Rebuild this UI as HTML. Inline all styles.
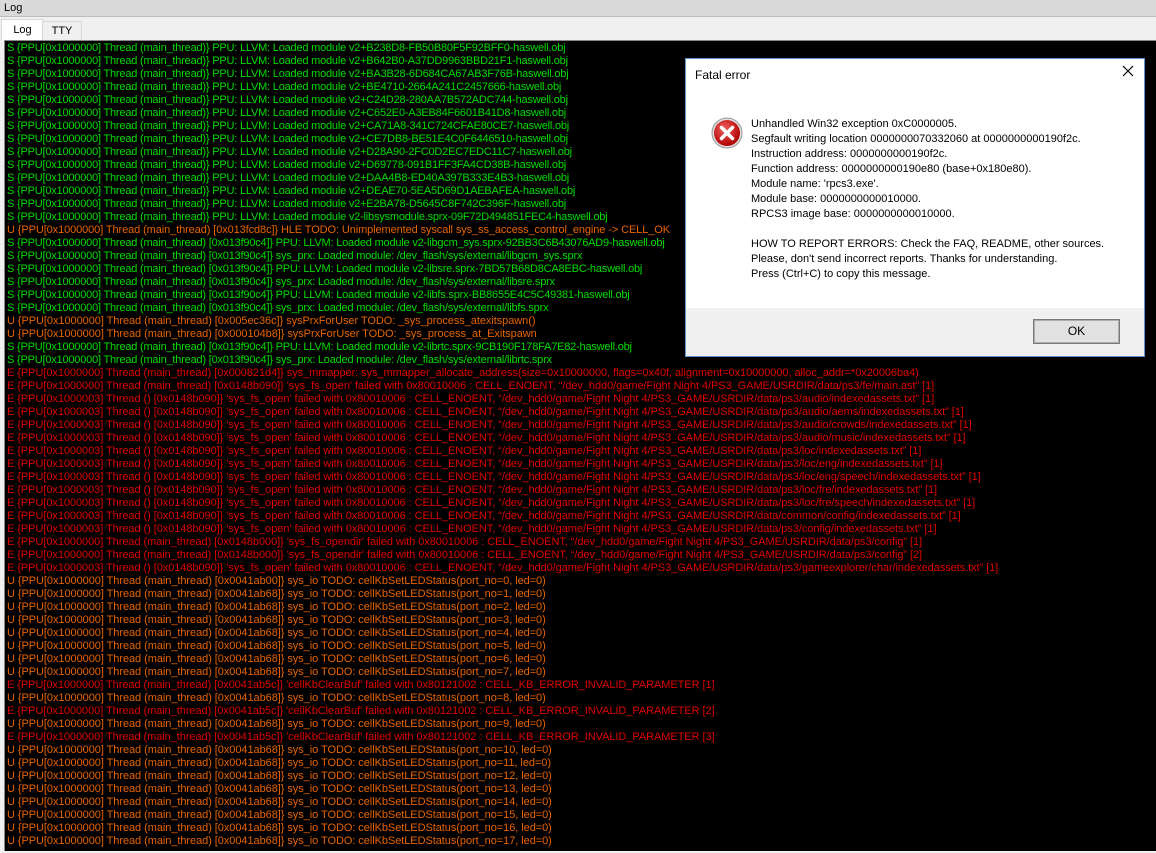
<!DOCTYPE html>
<html><head><meta charset="utf-8"><style>
html,body{margin:0;padding:0;width:1156px;height:853px;overflow:hidden;background:#f0f0f0;font-family:"Liberation Sans",sans-serif;}
#title{position:absolute;left:0;top:0;width:1156px;height:16px;background:#dadada;border-bottom:1px solid #bdbdbd;font-size:11px;line-height:16px;}
#title span{position:absolute;left:4px;top:0;}
.tab{position:absolute;font-size:11px;line-height:20px;text-align:center;}
#log{position:absolute;left:4px;top:40px;width:1152px;height:810px;background:#000;border-top:1px solid #888;border-left:1px solid #888;overflow:hidden;}
#lines{position:absolute;left:2px;top:1px;font-size:11px;line-height:13px;white-space:pre;}
.s{color:#00dd00;letter-spacing:-0.2px}.u{color:#e86400;letter-spacing:-0.06px}.e{color:#e00000;letter-spacing:-0.06px}
#dlg{position:absolute;left:685px;top:58px;width:458px;height:297px;background:#fff;border:1px solid #5a8fd0;font-size:12px;}
#dlg .t{position:absolute;left:9px;top:9px;}
#dlg .x{position:absolute;left:436px;top:6px;}
#dlg .msg{position:absolute;left:65px;top:58px;line-height:15px;white-space:pre;font-size:11px;}
#dlg .foot{position:absolute;left:0;top:249px;width:458px;height:48px;background:#f0f0f0;}
#dlg .ok{position:absolute;left:348px;top:12px;width:85px;height:23px;border:1px solid #adadad;background:#e1e1e1;box-sizing:border-box;outline:1px solid #7a7a7a;text-align:center;line-height:21px;}
</style></head><body>
<div id="title"><span>Log</span></div>
<div class="tab" style="left:1px;top:19px;width:41px;height:21px;background:#fff;border:1px solid #d9d9d9;border-bottom:none;">Log</div>
<div class="tab" style="left:42px;top:21px;width:38px;height:18px;line-height:18px;background:#f0f0f0;border:1px solid #d9d9d9;border-bottom:none;">TTY</div>
<div id="log"><div id="lines"><span class="s">S {PPU[0x1000000] Thread (main_thread)} PPU: LLVM: Loaded module v2+B238D8-FB50B80F5F92BFF0-haswell.obj
S {PPU[0x1000000] Thread (main_thread)} PPU: LLVM: Loaded module v2+B642B0-A37DD9963BBD21F1-haswell.obj
S {PPU[0x1000000] Thread (main_thread)} PPU: LLVM: Loaded module v2+BA3B28-6D684CA67AB3F76B-haswell.obj
S {PPU[0x1000000] Thread (main_thread)} PPU: LLVM: Loaded module v2+BE4710-2664A241C2457666-haswell.obj
S {PPU[0x1000000] Thread (main_thread)} PPU: LLVM: Loaded module v2+C24D28-280AA7B572ADC744-haswell.obj
S {PPU[0x1000000] Thread (main_thread)} PPU: LLVM: Loaded module v2+C652E0-A3EB84F6601B41D8-haswell.obj
S {PPU[0x1000000] Thread (main_thread)} PPU: LLVM: Loaded module v2+CA71A8-341C724CFAE80CE7-haswell.obj
S {PPU[0x1000000] Thread (main_thread)} PPU: LLVM: Loaded module v2+CE7DB8-BE51E4C0F6446510-haswell.obj
S {PPU[0x1000000] Thread (main_thread)} PPU: LLVM: Loaded module v2+D28A90-2FC0D2EC7EDC11C7-haswell.obj
S {PPU[0x1000000] Thread (main_thread)} PPU: LLVM: Loaded module v2+D69778-091B1FF3FA4CD38B-haswell.obj
S {PPU[0x1000000] Thread (main_thread)} PPU: LLVM: Loaded module v2+DAA4B8-ED40A397B333E4B3-haswell.obj
S {PPU[0x1000000] Thread (main_thread)} PPU: LLVM: Loaded module v2+DEAE70-5EA5D69D1AEBAFEA-haswell.obj
S {PPU[0x1000000] Thread (main_thread)} PPU: LLVM: Loaded module v2+E2BA78-D5645C8F742C396F-haswell.obj
S {PPU[0x1000000] Thread (main_thread)} PPU: LLVM: Loaded module v2-libsysmodule.sprx-09F72D494851FEC4-haswell.obj</span>
<span class="u" style="letter-spacing:-0.1px">U {PPU[0x1000000] Thread (main_thread) [0x013fcd8c]} HLE TODO: Unimplemented syscall sys_ss_access_control_engine -&gt; CELL_OK</span>
<span class="s">S {PPU[0x1000000] Thread (main_thread) [0x013f90c4]} PPU: LLVM: Loaded module v2-libgcm_sys.sprx-92BB3C6B43076AD9-haswell.obj
S {PPU[0x1000000] Thread (main_thread) [0x013f90c4]} sys_prx: Loaded module: /dev_flash/sys/external/libgcm_sys.sprx
S {PPU[0x1000000] Thread (main_thread) [0x013f90c4]} PPU: LLVM: Loaded module v2-libsre.sprx-7BD57B68D8CA8EBC-haswell.obj
S {PPU[0x1000000] Thread (main_thread) [0x013f90c4]} sys_prx: Loaded module: /dev_flash/sys/external/libsre.sprx
S {PPU[0x1000000] Thread (main_thread) [0x013f90c4]} PPU: LLVM: Loaded module v2-libfs.sprx-BB8655E4C5C49381-haswell.obj
S {PPU[0x1000000] Thread (main_thread) [0x013f90c4]} sys_prx: Loaded module: /dev_flash/sys/external/libfs.sprx</span>
<span class="u">U {PPU[0x1000000] Thread (main_thread) [0x005ec36c]} sysPrxForUser TODO: _sys_process_atexitspawn()
U {PPU[0x1000000] Thread (main_thread) [0x000104b8]} sysPrxForUser TODO: _sys_process_at_Exitspawn</span>
<span class="s">S {PPU[0x1000000] Thread (main_thread) [0x013f90c4]} PPU: LLVM: Loaded module v2-librtc.sprx-9CB190F178FA7E82-haswell.obj
S {PPU[0x1000000] Thread (main_thread) [0x013f90c4]} sys_prx: Loaded module: /dev_flash/sys/external/librtc.sprx</span>
<span class="e">E {PPU[0x1000000] Thread (main_thread) [0x000821d4]} sys_mmapper: sys_mmapper_allocate_address(size=0x10000000, flags=0x40f, alignment=0x10000000, alloc_addr=*0x20006ba4)
E {PPU[0x1000000] Thread (main_thread) [0x0148b090]} 'sys_fs_open' failed with 0x80010006 : CELL_ENOENT, “/dev_hdd0/game/Fight Night 4/PS3_GAME/USRDIR/data/ps3/fe/main.ast” [1]
E {PPU[0x1000003] Thread () [0x0148b090]} 'sys_fs_open' failed with 0x80010006 : CELL_ENOENT, “/dev_hdd0/game/Fight Night 4/PS3_GAME/USRDIR/data/ps3/audio/indexedassets.txt” [1]
E {PPU[0x1000003] Thread () [0x0148b090]} 'sys_fs_open' failed with 0x80010006 : CELL_ENOENT, “/dev_hdd0/game/Fight Night 4/PS3_GAME/USRDIR/data/ps3/audio/aems/indexedassets.txt” [1]
E {PPU[0x1000003] Thread () [0x0148b090]} 'sys_fs_open' failed with 0x80010006 : CELL_ENOENT, “/dev_hdd0/game/Fight Night 4/PS3_GAME/USRDIR/data/ps3/audio/crowds/indexedassets.txt” [1]
E {PPU[0x1000003] Thread () [0x0148b090]} 'sys_fs_open' failed with 0x80010006 : CELL_ENOENT, “/dev_hdd0/game/Fight Night 4/PS3_GAME/USRDIR/data/ps3/audio/music/indexedassets.txt” [1]
E {PPU[0x1000003] Thread () [0x0148b090]} 'sys_fs_open' failed with 0x80010006 : CELL_ENOENT, “/dev_hdd0/game/Fight Night 4/PS3_GAME/USRDIR/data/ps3/loc/indexedassets.txt” [1]
E {PPU[0x1000003] Thread () [0x0148b090]} 'sys_fs_open' failed with 0x80010006 : CELL_ENOENT, “/dev_hdd0/game/Fight Night 4/PS3_GAME/USRDIR/data/ps3/loc/eng/indexedassets.txt” [1]
E {PPU[0x1000003] Thread () [0x0148b090]} 'sys_fs_open' failed with 0x80010006 : CELL_ENOENT, “/dev_hdd0/game/Fight Night 4/PS3_GAME/USRDIR/data/ps3/loc/eng/speech/indexedassets.txt” [1]
E {PPU[0x1000003] Thread () [0x0148b090]} 'sys_fs_open' failed with 0x80010006 : CELL_ENOENT, “/dev_hdd0/game/Fight Night 4/PS3_GAME/USRDIR/data/ps3/loc/fre/indexedassets.txt” [1]
E {PPU[0x1000003] Thread () [0x0148b090]} 'sys_fs_open' failed with 0x80010006 : CELL_ENOENT, “/dev_hdd0/game/Fight Night 4/PS3_GAME/USRDIR/data/ps3/loc/fre/speech/indexedassets.txt” [1]
E {PPU[0x1000003] Thread () [0x0148b090]} 'sys_fs_open' failed with 0x80010006 : CELL_ENOENT, “/dev_hdd0/game/Fight Night 4/PS3_GAME/USRDIR/data/common/config/indexedassets.txt” [1]
E {PPU[0x1000003] Thread () [0x0148b090]} 'sys_fs_open' failed with 0x80010006 : CELL_ENOENT, “/dev_hdd0/game/Fight Night 4/PS3_GAME/USRDIR/data/ps3/config/indexedassets.txt” [1]
E {PPU[0x1000000] Thread (main_thread) [0x0148b000]} 'sys_fs_opendir' failed with 0x80010006 : CELL_ENOENT, “/dev_hdd0/game/Fight Night 4/PS3_GAME/USRDIR/data/ps3/config” [1]
E {PPU[0x1000000] Thread (main_thread) [0x0148b000]} 'sys_fs_opendir' failed with 0x80010006 : CELL_ENOENT, “/dev_hdd0/game/Fight Night 4/PS3_GAME/USRDIR/data/ps3/config” [2]
E {PPU[0x1000003] Thread () [0x0148b090]} 'sys_fs_open' failed with 0x80010006 : CELL_ENOENT, “/dev_hdd0/game/Fight Night 4/PS3_GAME/USRDIR/data/ps3/gameexplorer/char/indexedassets.txt” [1]</span>
<span class="u">U {PPU[0x1000000] Thread (main_thread) [0x0041ab00]} sys_io TODO: cellKbSetLEDStatus(port_no=0, led=0)
U {PPU[0x1000000] Thread (main_thread) [0x0041ab68]} sys_io TODO: cellKbSetLEDStatus(port_no=1, led=0)
U {PPU[0x1000000] Thread (main_thread) [0x0041ab68]} sys_io TODO: cellKbSetLEDStatus(port_no=2, led=0)
U {PPU[0x1000000] Thread (main_thread) [0x0041ab68]} sys_io TODO: cellKbSetLEDStatus(port_no=3, led=0)
U {PPU[0x1000000] Thread (main_thread) [0x0041ab68]} sys_io TODO: cellKbSetLEDStatus(port_no=4, led=0)
U {PPU[0x1000000] Thread (main_thread) [0x0041ab68]} sys_io TODO: cellKbSetLEDStatus(port_no=5, led=0)
U {PPU[0x1000000] Thread (main_thread) [0x0041ab68]} sys_io TODO: cellKbSetLEDStatus(port_no=6, led=0)
U {PPU[0x1000000] Thread (main_thread) [0x0041ab68]} sys_io TODO: cellKbSetLEDStatus(port_no=7, led=0)</span>
<span class="e">E {PPU[0x1000000] Thread (main_thread) [0x0041ab5c]} 'cellKbClearBuf' failed with 0x80121002 : CELL_KB_ERROR_INVALID_PARAMETER [1]</span>
<span class="u">U {PPU[0x1000000] Thread (main_thread) [0x0041ab68]} sys_io TODO: cellKbSetLEDStatus(port_no=8, led=0)</span>
<span class="e">E {PPU[0x1000000] Thread (main_thread) [0x0041ab5c]} 'cellKbClearBuf' failed with 0x80121002 : CELL_KB_ERROR_INVALID_PARAMETER [2]</span>
<span class="u">U {PPU[0x1000000] Thread (main_thread) [0x0041ab68]} sys_io TODO: cellKbSetLEDStatus(port_no=9, led=0)</span>
<span class="e">E {PPU[0x1000000] Thread (main_thread) [0x0041ab5c]} 'cellKbClearBuf' failed with 0x80121002 : CELL_KB_ERROR_INVALID_PARAMETER [3]</span>
<span class="u">U {PPU[0x1000000] Thread (main_thread) [0x0041ab68]} sys_io TODO: cellKbSetLEDStatus(port_no=10, led=0)
U {PPU[0x1000000] Thread (main_thread) [0x0041ab68]} sys_io TODO: cellKbSetLEDStatus(port_no=11, led=0)
U {PPU[0x1000000] Thread (main_thread) [0x0041ab68]} sys_io TODO: cellKbSetLEDStatus(port_no=12, led=0)
U {PPU[0x1000000] Thread (main_thread) [0x0041ab68]} sys_io TODO: cellKbSetLEDStatus(port_no=13, led=0)
U {PPU[0x1000000] Thread (main_thread) [0x0041ab68]} sys_io TODO: cellKbSetLEDStatus(port_no=14, led=0)
U {PPU[0x1000000] Thread (main_thread) [0x0041ab68]} sys_io TODO: cellKbSetLEDStatus(port_no=15, led=0)
U {PPU[0x1000000] Thread (main_thread) [0x0041ab68]} sys_io TODO: cellKbSetLEDStatus(port_no=16, led=0)
U {PPU[0x1000000] Thread (main_thread) [0x0041ab68]} sys_io TODO: cellKbSetLEDStatus(port_no=17, led=0)</span></div></div>
<div id="dlg">
<div class="t">Fatal error</div>
<svg class="x" width="12" height="12" viewBox="0 0 12 12"><path d="M1 1L11 11M11 1L1 11" stroke="#000" stroke-width="1.2"/></svg>
<svg style="position:absolute;left:25px;top:58px" width="32" height="32" viewBox="0 0 32 32"><defs><radialGradient id="g" cx="40%" cy="35%" r="65%"><stop offset="0" stop-color="#f06060"/><stop offset="1" stop-color="#b00000"/></radialGradient></defs><circle cx="16" cy="16" r="15" fill="#ddd" stroke="#999"/><circle cx="16" cy="16" r="13" fill="url(#g)"/><path d="M10.5 10.5L21.5 21.5M21.5 10.5L10.5 21.5" stroke="#fff" stroke-width="3.6" stroke-linecap="round"/></svg>
<div class="msg">Unhandled Win32 exception 0xC0000005.
Segfault writing location 0000000070332060 at 0000000000190f2c.
Instruction address: 0000000000190f2c.
Function address: 0000000000190e80 (base+0x180e80).
Module name: 'rpcs3.exe'.
Module base: 0000000000010000.
RPCS3 image base: 0000000000010000.

HOW TO REPORT ERRORS: Check the FAQ, README, other sources.
Please, don't send incorrect reports. Thanks for understanding.
Press (Ctrl+C) to copy this message.</div>
<div class="foot"><div class="ok">OK</div></div>
</div>
</body></html>
